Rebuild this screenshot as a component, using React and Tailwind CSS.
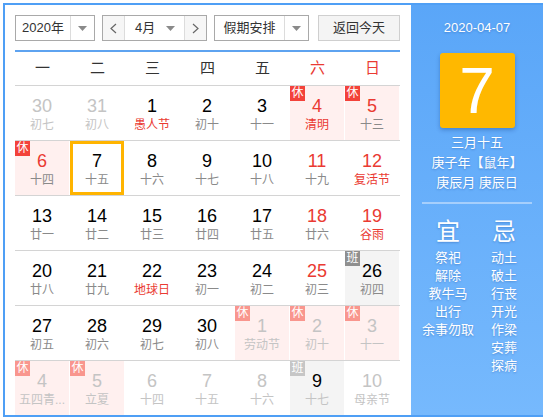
import React from "react";

const weekdays = ["一", "二", "三", "四", "五", "六", "日"];

// o = other month, rest = 休, work = 班, red = red number, fest = red lunar text
const rows = [
  [
    { d: 30, l: "初七", o: true },
    { d: 31, l: "初八", o: true },
    { d: 1, l: "愚人节", fest: true },
    { d: 2, l: "初十" },
    { d: 3, l: "十一" },
    { d: 4, l: "清明", red: true, fest: true, rest: true },
    { d: 5, l: "十三", red: true, rest: true },
  ],
  [
    { d: 6, l: "十四", red: true, rest: true },
    { d: 7, l: "十五", today: true },
    { d: 8, l: "十六" },
    { d: 9, l: "十七" },
    { d: 10, l: "十八" },
    { d: 11, l: "十九", red: true },
    { d: 12, l: "复活节", red: true, fest: true },
  ],
  [
    { d: 13, l: "廿一" },
    { d: 14, l: "廿二" },
    { d: 15, l: "廿三" },
    { d: 16, l: "廿四" },
    { d: 17, l: "廿五" },
    { d: 18, l: "廿六", red: true },
    { d: 19, l: "谷雨", red: true, fest: true },
  ],
  [
    { d: 20, l: "廿八" },
    { d: 21, l: "廿九" },
    { d: 22, l: "地球日", fest: true },
    { d: 23, l: "初一" },
    { d: 24, l: "初二" },
    { d: 25, l: "初三", red: true },
    { d: 26, l: "初四", work: true },
  ],
  [
    { d: 27, l: "初五" },
    { d: 28, l: "初六" },
    { d: 29, l: "初七" },
    { d: 30, l: "初八" },
    { d: 1, l: "劳动节", o: true, rest: true },
    { d: 2, l: "初十", o: true, rest: true },
    { d: 3, l: "十一", o: true, rest: true },
  ],
  [
    { d: 4, l: "五四青...", o: true, rest: true },
    { d: 5, l: "立夏", o: true, rest: true },
    { d: 6, l: "十四", o: true },
    { d: 7, l: "十五", o: true },
    { d: 8, l: "十六", o: true },
    { d: 9, l: "十七", o: true, work: true, dark: true },
    { d: 10, l: "母亲节", o: true },
  ],
];

const yi = ["祭祀", "解除", "教牛马", "出行", "余事勿取"];
const ji = ["动土", "破土", "行丧", "开光", "作梁", "安葬", "探病"];

const Caret = () => (
  <svg width="9" height="5" viewBox="0 0 9 5">
    <polygon points="0,0 9,0 4.5,5" fill="#8a8a8a" />
  </svg>
);

const Chevron = ({ right }) => (
  <svg width="7" height="11" viewBox="0 0 7 11">
    <polyline
      points={right ? "1,1 6,5.5 1,10" : "6,1 1,5.5 6,10"}
      fill="none"
      stroke="#666"
      strokeWidth="1.2"
    />
  </svg>
);

function DayCell({ c }) {
  const bg = c.rest ? "bg-[#fff0ef]" : c.work ? "bg-[#f4f4f4]" : "bg-white";
  const num = c.o
    ? c.dark
      ? "text-black"
      : "text-[#c4c4c4]"
    : c.red
    ? "text-[#ea3a32]"
    : "text-black";
  const lunar = c.o
    ? "text-[#c4c4c4]"
    : c.fest
    ? "text-[#ea3a32]"
    : "text-[#8a8a8a]";

  return (
    <div className={`relative w-[55px] h-full border-r border-white ${bg}`}>
      {c.rest && (
        <span
          className={`absolute left-0 top-0 w-[15px] h-[15px] text-[12px] leading-[15px] text-white text-center ${
            c.o ? "bg-[#f9968e]" : "bg-[#f3423a]"
          }`}
        >
          休
        </span>
      )}
      {c.work && (
        <span
          className={`absolute left-0 top-0 w-[15px] h-[15px] text-[12px] leading-[15px] text-white text-center ${
            c.o ? "bg-[#c6c6c6]" : "bg-[#8f8f8f]"
          }`}
        >
          班
        </span>
      )}
      <div
        className={`h-full flex flex-col items-center ${
          c.today ? "border-[3px] border-[#ffb400] pt-[7px]" : "pt-[10px]"
        }`}
      >
        <span className={`text-[18px] leading-[20px] ${num}`}>{c.d}</span>
        <span className={`mt-px text-[12px] leading-[16px] whitespace-nowrap ${lunar}`}>
          {c.l}
        </span>
      </div>
    </div>
  );
}

export default function App() {
  return (
    <div className="w-[543px] h-[419px] overflow-hidden bg-white pt-[3px] pl-[3px] font-['Liberation_Sans','Noto_Sans_CJK_SC',sans-serif]">
      <div className="w-[542px] h-[414px] border-2 border-[#4f9ff5] flex">
        {/* calendar side */}
        <div className="w-[406px] pl-[10px] pr-[11px] pt-[10px] bg-white">
          {/* toolbar */}
          <div className="flex h-[26px] text-[13px] text-[#333]">
            <div className="w-[80px] flex border border-[#a9a9a9]">
              <div className="w-[55px] flex items-center justify-center border-r border-[#dcdcdc]">
                2020年
              </div>
              <div className="flex-1 flex items-center justify-center">
                <Caret />
              </div>
            </div>
            <div className="ml-[7px] w-[105px] flex border border-[#a9a9a9]">
              <div className="w-[22px] flex items-center justify-center bg-[#f6f6f6] border-r border-[#dcdcdc]">
                <Chevron />
              </div>
              <div className="w-[60px] flex items-center border-r border-[#dcdcdc]">
                <span className="ml-[10px]">4月</span>
                <span className="ml-auto mr-[9px] flex">
                  <Caret />
                </span>
              </div>
              <div className="flex-1 flex items-center justify-center bg-[#f6f6f6]">
                <Chevron right />
              </div>
            </div>
            <div className="ml-[7px] w-[95px] flex border border-[#a9a9a9]">
              <div className="w-[70px] flex items-center justify-center border-r border-[#dcdcdc]">
                假期安排
              </div>
              <div className="flex-1 flex items-center justify-center">
                <Caret />
              </div>
            </div>
            <div className="ml-[9px] w-[82px] flex items-center justify-center border border-[#cfcfcf] bg-[#f4f4f4]">
              返回今天
            </div>
          </div>

          <div className="mt-[9px] h-[2px] bg-[#5ea3f0]" />

          {/* week header */}
          <div className="flex h-[34px] border-b border-[#d4d4d4]">
            {weekdays.map((w, i) => (
              <div
                key={w}
                className={`w-[55px] flex items-center justify-center text-[15px] ${
                  i > 4 ? "text-[#ea3a32]" : "text-[#333]"
                }`}
              >
                {w}
              </div>
            ))}
          </div>

          {/* days */}
          {rows.map((r, ri) => (
            <div
              key={ri}
              className={`flex ${ri < 5 ? "h-[55px] border-b border-[#d4d4d4]" : "h-[54px]"}`}
            >
              {r.map((c, ci) => (
                <DayCell key={ci} c={c} />
              ))}
            </div>
          ))}
        </div>

        {/* detail side */}
        <div className="flex-1 flex flex-col items-center bg-gradient-to-b from-[#5aa6f8] to-[#76b9fd] text-white [text-shadow:0_1px_2px_rgba(20,70,150,0.35)]">
          <div className="mt-[14px] text-[13px] leading-[18px]">2020-04-07</div>
          <div className="mt-[16px] w-[75px] h-[75px] rounded-[3px] bg-[#ffb800] shadow-[0_2px_4px_rgba(0,40,110,0.3)] flex items-center justify-center text-[64px] leading-none [text-shadow:none]">
            7
          </div>
          <div className="mt-[5px] text-[13px] leading-[20px]">三月十五</div>
          <div className="text-[13px] leading-[20px]">庚子年【鼠年】</div>
          <div className="text-[13px] leading-[20px]">庚辰月 庚辰日</div>
          <div className="mt-[9px] w-[110px] h-[2px] bg-[#a6cffc] [text-shadow:none]" />
          <div className="mt-[14px] flex pr-[2px]">
            <div className="w-[56px] flex flex-col items-center">
              <span className="text-[24px] leading-[28px]">宜</span>
              <div className="mt-[3px] flex flex-col items-center text-[13px] leading-[18px]">
                {yi.map((t) => (
                  <span key={t} className="whitespace-nowrap">{t}</span>
                ))}
              </div>
            </div>
            <div className="w-[56px] flex flex-col items-center">
              <span className="text-[24px] leading-[28px]">忌</span>
              <div className="mt-[3px] flex flex-col items-center text-[13px] leading-[18px]">
                {ji.map((t) => (
                  <span key={t} className="whitespace-nowrap">{t}</span>
                ))}
              </div>
            </div>
          </div>
        </div>
      </div>
    </div>
  );
}
